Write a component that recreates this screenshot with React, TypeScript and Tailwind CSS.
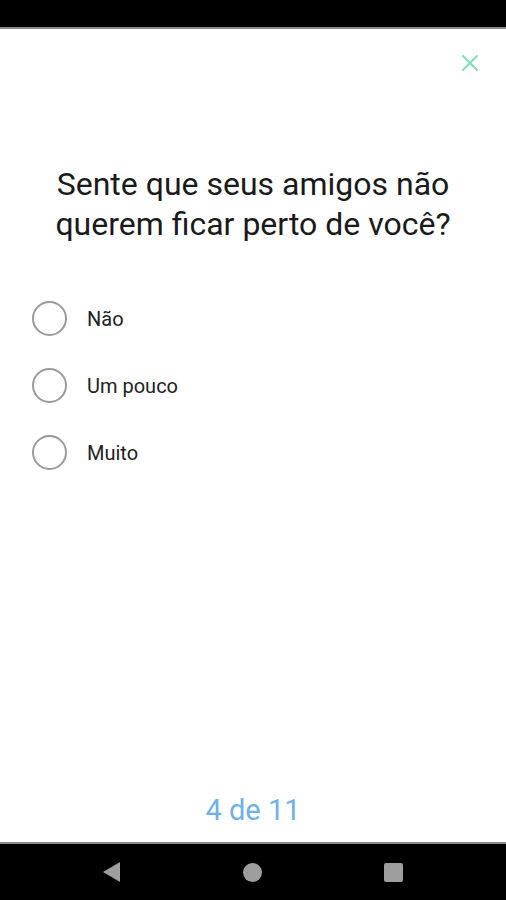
const options = ['Não', 'Um pouco', 'Muito']

export default function App() {
  return (
    <div className="flex h-[900px] w-[506px] flex-col bg-white font-['Roboto',sans-serif]">
      <div className="h-[29px] shrink-0 border-b-2 border-[#8a8a8a] bg-black" />

      <div className="flex flex-1 flex-col">
        <div className="flex justify-end pr-[27px] pt-[25px]">
          <svg width="18" height="18" viewBox="0 0 18 18" className="text-[#7fdcbf]">
            <path d="M2 2L16 16M16 2L2 16" stroke="currentColor" strokeWidth="2" strokeLinecap="round" />
          </svg>
        </div>

        <h1 className="mt-[92px] px-4 text-center text-[32px] leading-[40px] text-[#1a1a1a]">
          Sente que seus amigos não
          <br />
          querem ficar perto de você?
        </h1>

        <div className="mt-[57px] flex flex-col gap-[32px] pl-[32px]">
          {options.map((o) => (
            <label key={o} className="flex items-center gap-[20px]">
              <span className="h-[35px] w-[35px] rounded-full border-2 border-[#9a9a9a]" />
              <span className="text-[20px] text-[#222]">{o}</span>
            </label>
          ))}
        </div>

        <div className="mt-auto pb-[10px] text-center text-[29px] text-[#6fb0ea]">4 de 11</div>
      </div>

      <div className="flex h-[58px] shrink-0 items-center justify-center gap-[122px] border-t-2 border-[#8a8a8a] bg-black pr-[2px]">
        <svg width="20" height="22" viewBox="0 0 20 22">
          <path d="M19 1L2 11L19 21Z" fill="#9e9e9e" />
        </svg>
        <div className="h-[19px] w-[19px] rounded-full bg-[#9e9e9e]" />
        <div className="h-[19px] w-[19px] rounded-[2px] bg-[#9e9e9e]" />
      </div>
    </div>
  )
}
